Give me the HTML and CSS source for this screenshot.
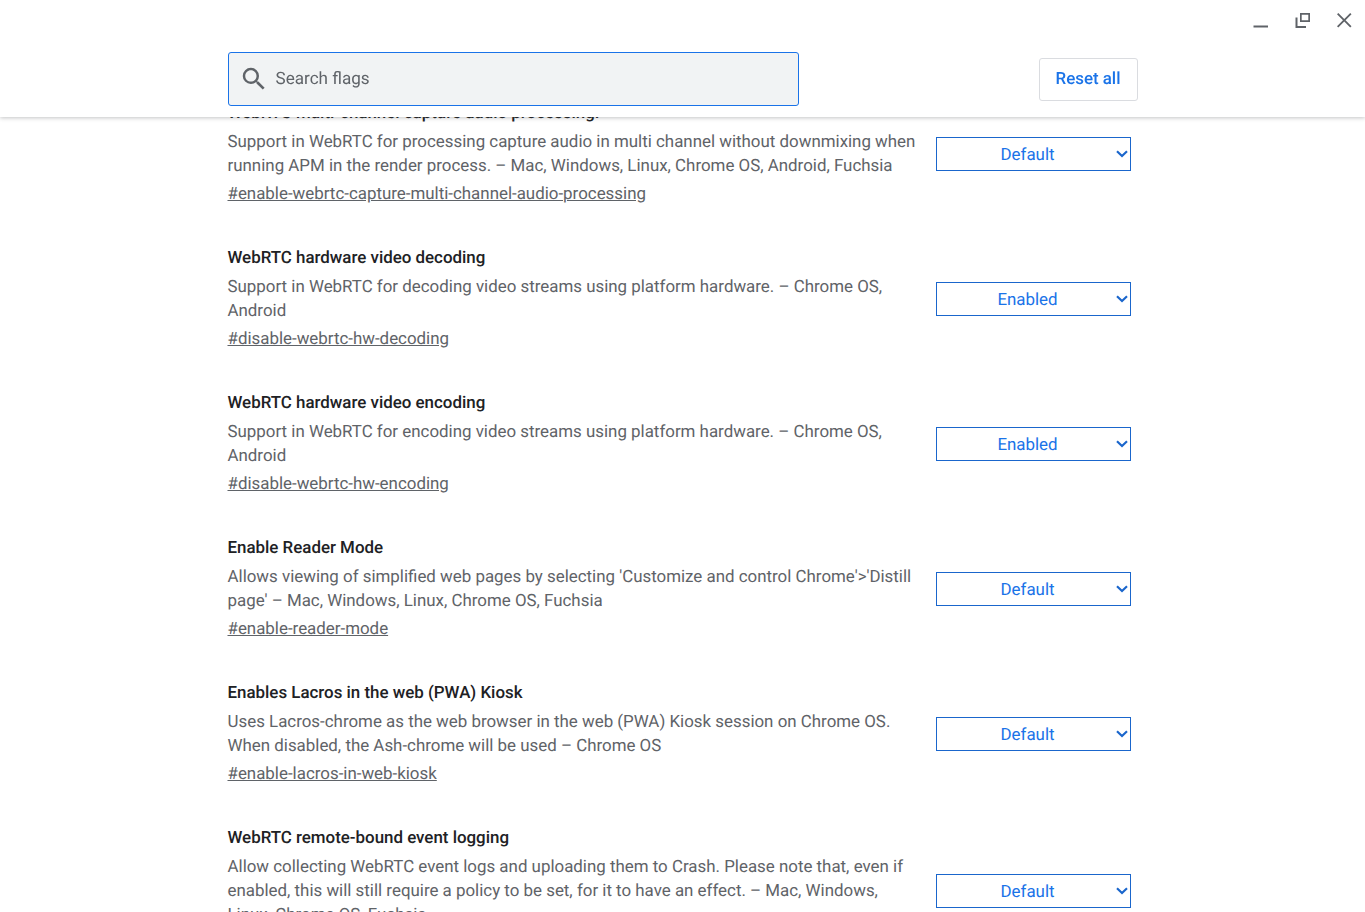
FILE: index.html
```html
<!DOCTYPE html>
<html lang="en">
<head>
<meta charset="utf-8">
<title>Flags</title>
<link rel="stylesheet" href="styles.css">
</head>
<body>
<header class="header">
  <div class="window-controls">
    <svg class="win-icon" viewBox="0 0 16 16"><path d="M.5 12.500h14.500v2H.5z"/></svg>
    <svg class="win-icon" viewBox="0 0 16 16"><path d="M5 0h10v9H5zM6.700 1.700v5.600h6.600V1.700zM.5 4.500h2V13h8.500v2H.5z"/></svg>
    <svg class="win-icon" viewBox="0 0 16 16"><path d="M1.300 0 7.250 5.950 13.200 0 14.500 1.300 8.550 7.250 14.500 13.200 13.200 14.500 7.250 8.550 1.300 14.500 0 13.200 5.950 7.250 0 1.300z"/></svg>
  </div>
  <div class="header-inner">
    <div class="search">
      <svg class="search-icon" viewBox="0 0 24 24"><path d="M15.500 14h-.79l-.28-.27A6.470 6.470 0 0 0 16 9.500 6.500 6.500 0 1 0 9.500 16c1.610 0 3.090-.59 4.230-1.570l.27.28v.79l5 4.990L20.490 19l-4.990-5zm-6 0C7.010 14 5 11.990 5 9.500S7.010 5 9.500 5 14 7.010 14 9.500 11.990 14 9.500 14z"/></svg>
      <span class="search-text">Search flags</span>
    </div>
    <button class="reset">Reset all</button>
  </div>
</header>
<main class="list">
  <section class="item">
    <div class="info">
      <h3 class="title">WebRTC multi-channel capture audio processing.</h3>
      <p class="desc">Support in WebRTC for processing capture audio in multi channel without downmixing when running APM in the render process. – Mac, Windows, Linux, Chrome OS, Android, Fuchsia</p>
      <a class="link" href="#">#enable-webrtc-capture-multi-channel-audio-processing</a>
    </div>
    <select class="choice"><option>Default</option><option>Enabled</option><option>Disabled</option></select>
  </section>
  <section class="item">
    <div class="info">
      <h3 class="title">WebRTC hardware video decoding</h3>
      <p class="desc">Support in WebRTC for decoding video streams using platform hardware. – Chrome OS, Android</p>
      <a class="link" href="#">#disable-webrtc-hw-decoding</a>
    </div>
    <select class="choice"><option>Enabled</option><option>Disabled</option></select>
  </section>
  <section class="item">
    <div class="info">
      <h3 class="title">WebRTC hardware video encoding</h3>
      <p class="desc">Support in WebRTC for encoding video streams using platform hardware. – Chrome OS, Android</p>
      <a class="link" href="#">#disable-webrtc-hw-encoding</a>
    </div>
    <select class="choice"><option>Enabled</option><option>Disabled</option></select>
  </section>
  <section class="item">
    <div class="info">
      <h3 class="title">Enable Reader Mode</h3>
      <p class="desc">Allows viewing of simplified web pages by selecting 'Customize and control Chrome'&gt;'Distill page' – Mac, Windows, Linux, Chrome OS, Fuchsia</p>
      <a class="link" href="#">#enable-reader-mode</a>
    </div>
    <select class="choice"><option>Default</option><option>Enabled</option><option>Disabled</option></select>
  </section>
  <section class="item">
    <div class="info">
      <h3 class="title">Enables Lacros in the web (PWA) Kiosk</h3>
      <p class="desc">Uses Lacros-chrome as the web browser in the web (PWA) Kiosk session on Chrome OS. When disabled, the Ash-chrome will be used – Chrome OS</p>
      <a class="link" href="#">#enable-lacros-in-web-kiosk</a>
    </div>
    <select class="choice"><option>Default</option><option>Enabled</option><option>Disabled</option></select>
  </section>
  <section class="item">
    <div class="info">
      <h3 class="title">WebRTC remote-bound event logging</h3>
      <p class="desc">Allow collecting WebRTC event logs and uploading them to Crash. Please note that, even if enabled, this will still require a policy to be set, for it to have an effect. – Mac, Windows, Linux, Chrome OS, Fuchsia</p>
      <a class="link" href="#">#enable-webrtc-remote-event-log</a>
    </div>
    <select class="choice"><option>Default</option><option>Enabled</option><option>Disabled</option></select>
  </section>
</main>
</body>
</html>
```
FILE: styles.css
```css
* { box-sizing: border-box; }
html, body { margin: 0; height: 912px; overflow: hidden; background: #fff; }
body {
  font-family: Roboto, "Liberation Sans", sans-serif;
  color: #5f6368;
  font-size: 16.9px;
  text-rendering: geometricPrecision;
}

.header {
  position: fixed;
  top: 0; left: 0; right: 0;
  height: 117px;
  background: #fff;
  box-shadow: 0 1px 4px rgba(60, 64, 67, 0.3);
  z-index: 2;
}
.window-controls {
  position: absolute;
  top: 13px; right: 12px;
  display: flex;
  gap: 26px;
}
.win-icon { width: 16px; height: 16px; fill: #5f6368; display: block; }

.header-inner {
  width: 910px;
  margin: 0 auto;
  height: 117px;
  padding-top: 52px;
  display: flex;
  justify-content: space-between;
  align-items: flex-start;
}
.search {
  width: 571px;
  height: 54px;
  background: #f1f3f4;
  border: 1px solid #1a73e8;
  border-radius: 3px;
  display: flex;
  align-items: center;
  padding: 0 0 0 10px;
  gap: 7px;
}
.search-icon { width: 30px; height: 30px; fill: #5f6368; flex: none; }
.search-text { font-size: 17.1px; color: #5f6368; margin-bottom: 1px; }
.reset {
  margin-top: 6px;
  width: 99px;
  height: 43px;
  background: #fff;
  border: 1px solid #dadce0;
  border-radius: 3px;
  color: #1a73e8;
  font: 500 16.9px Roboto, sans-serif;
  text-rendering: geometricPrecision;
  padding: 0 0 1px;
}

.list { width: 910px; margin: 0 auto; padding-top: 100px; }
.item {
  display: flex;
  justify-content: space-between;
  align-items: center;
  padding-right: 7px;
  margin-bottom: 37px;
}
.info { width: 690px; padding-top: 1px; }
.title { margin: 0 0 5px; font-size: 16.9px; line-height: 24px; font-weight: 500; color: #202124; }
.desc { margin: 0; line-height: 24px; color: #5f6368; }
.link { display: block; margin-top: 4px; padding-bottom: 2px; line-height: 24px; color: #5f6368; }
.choice {
  appearance: none;
  width: 195px;
  height: 34px;
  background: #fff url("data:image/svg+xml,%3Csvg xmlns='http://www.w3.org/2000/svg' width='12' height='8' viewBox='0 0 12 8'%3E%3Cpath d='M1 1.300 6 6 11 1.300' fill='none' stroke='%231a66cc' stroke-width='2.200'/%3E%3C/svg%3E") no-repeat right 2px center;
  border: 1px solid #1a66cc;
  border-radius: 0;
  color: #1a73e8;
  font: 400 16.9px Roboto, sans-serif;
  text-rendering: geometricPrecision;
  text-align-last: center;
  padding: 1px 12px 0 1px;
  flex: none;
}
```
